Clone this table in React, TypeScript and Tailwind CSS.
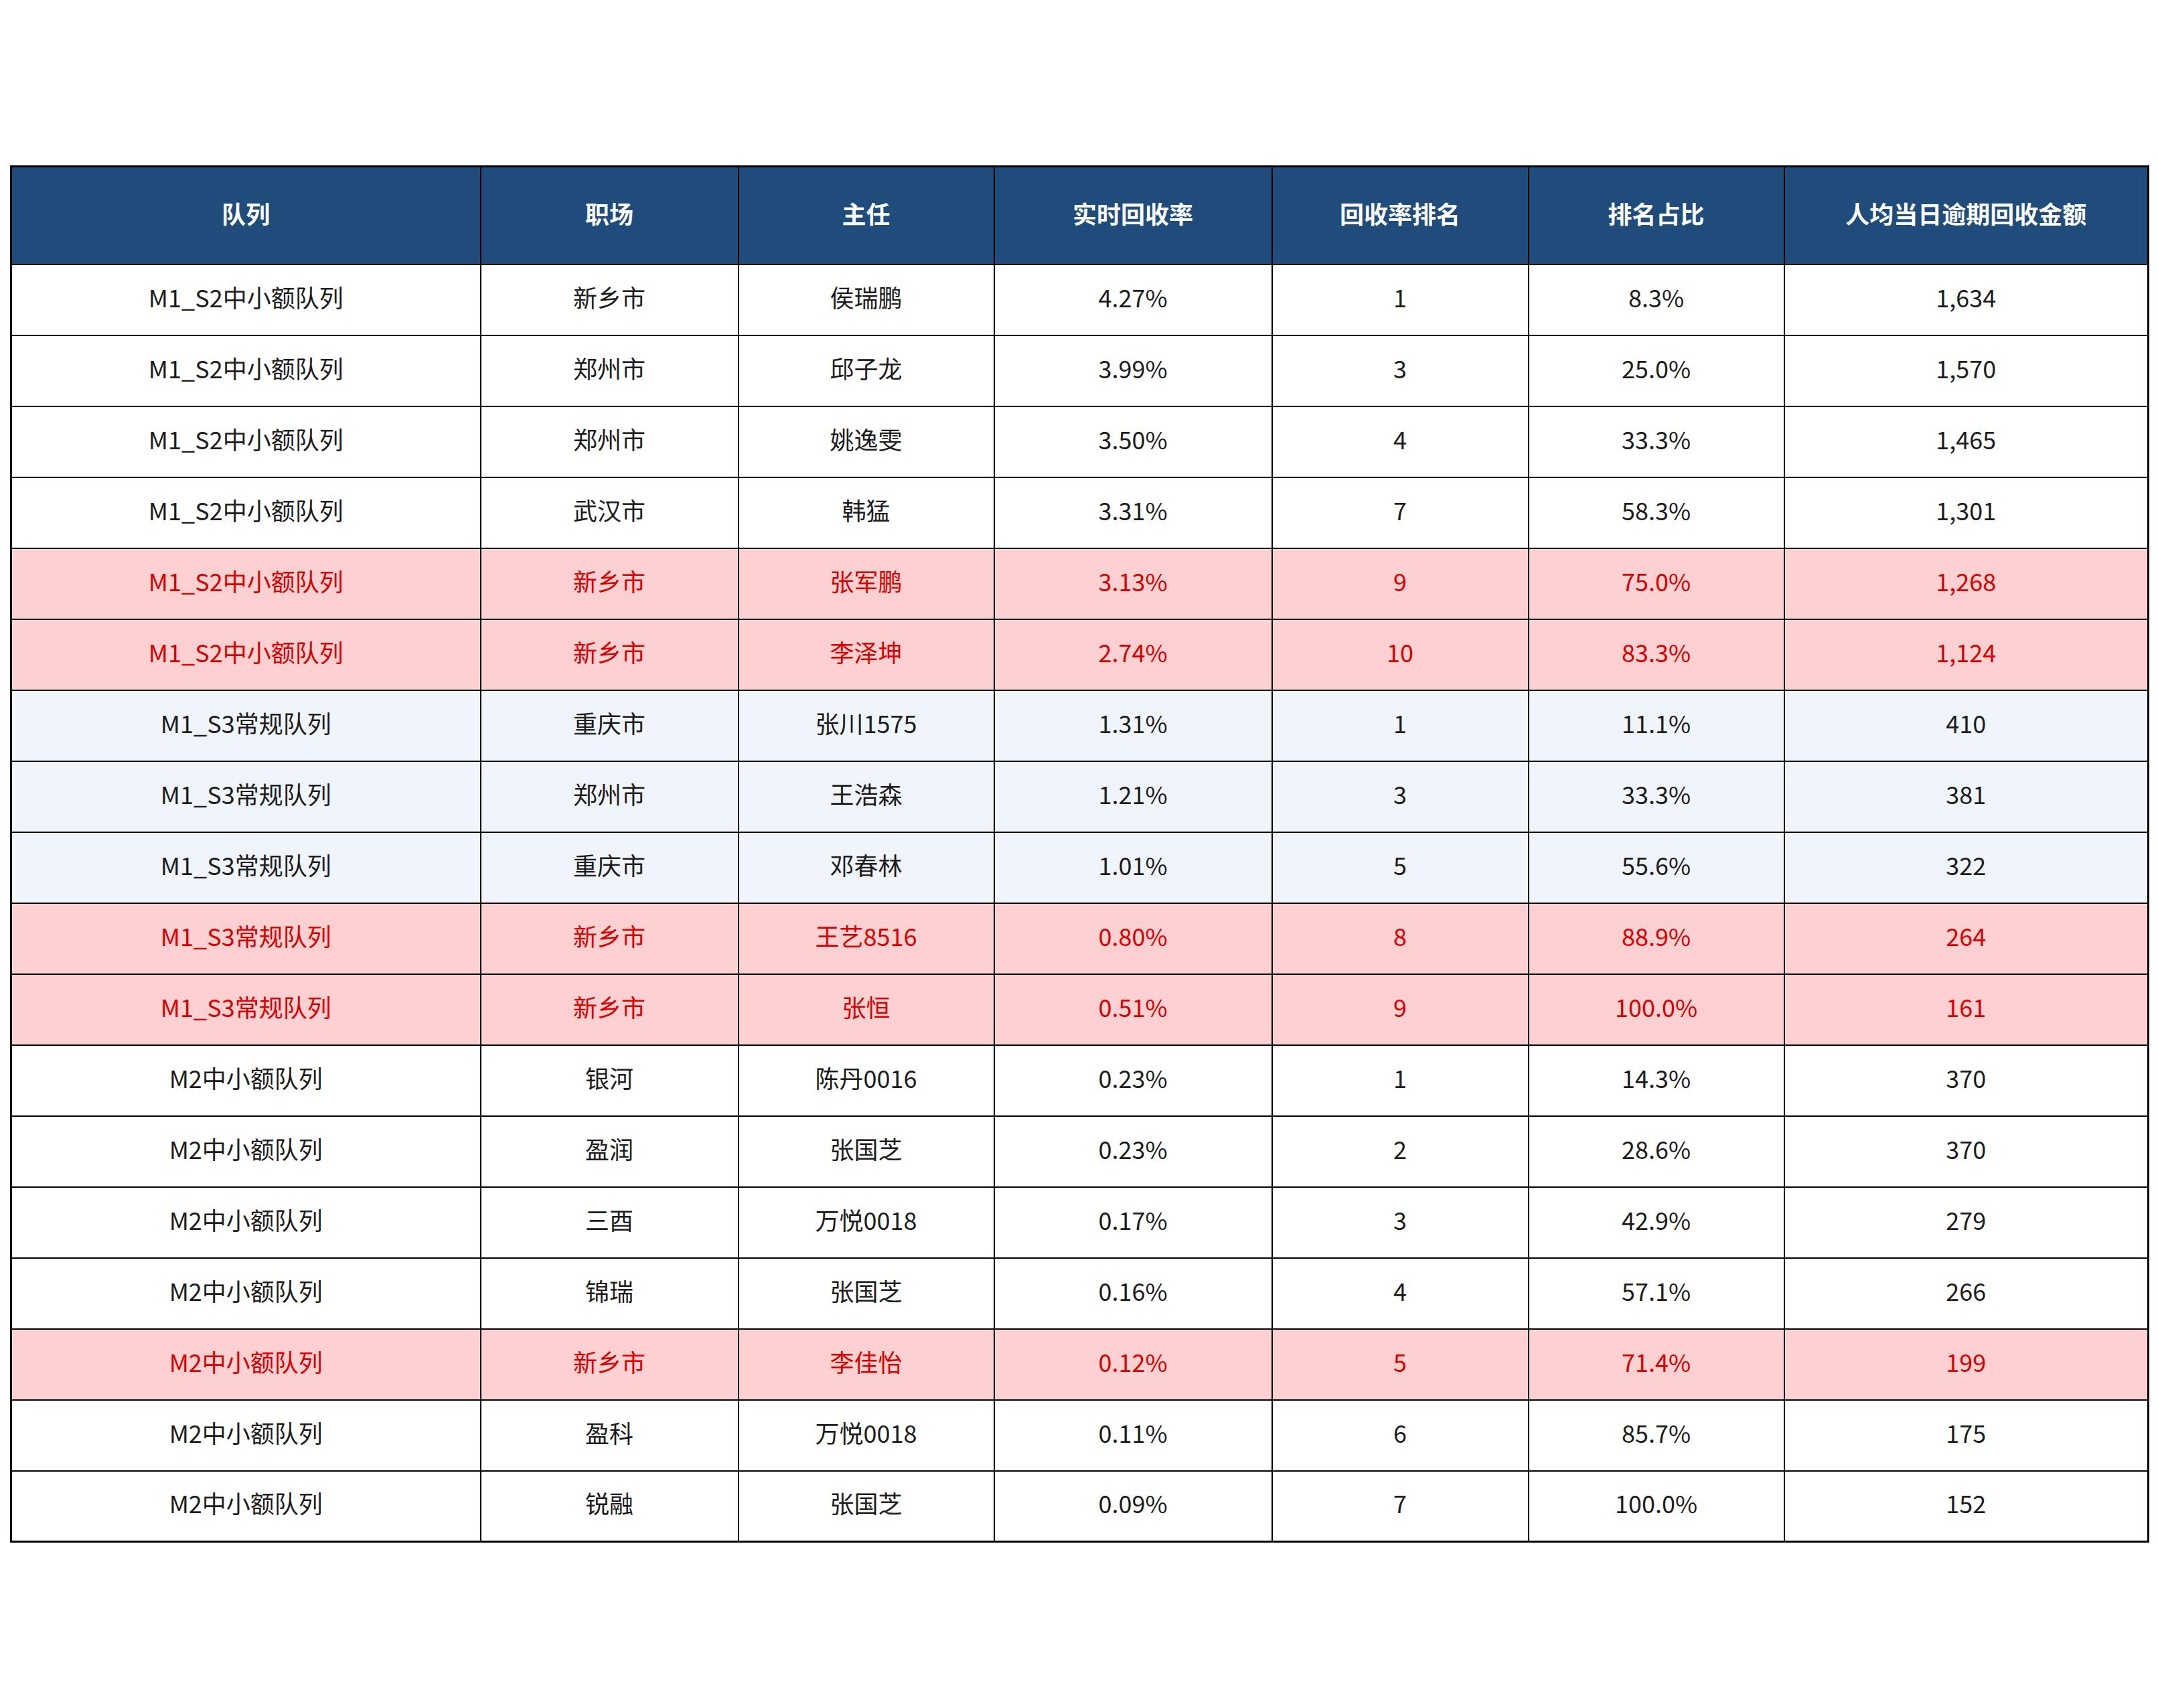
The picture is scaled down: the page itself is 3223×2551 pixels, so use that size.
type Tone = "plain" | "alert" | "soft";

type Row = {
  queue: string;
  site: string;
  lead: string;
  rate: string;
  rank: string;
  share: string;
  amount: string;
  tone: Tone;
};

const headers = ["队列", "职场", "主任", "实时回收率", "回收率排名", "排名占比", "人均当日逾期回收金额"];

const widths = ["w-[701px]", "w-[385px]", "w-[382px]", "w-[415px]", "w-[383px]", "w-[382px]", "w-[544px]"];

const rows: Row[] = [
  { queue: "M1_S2中小额队列", site: "新乡市", lead: "侯瑞鹏", rate: "4.27%", rank: "1", share: "8.3%", amount: "1,634", tone: "plain" },
  { queue: "M1_S2中小额队列", site: "郑州市", lead: "邱子龙", rate: "3.99%", rank: "3", share: "25.0%", amount: "1,570", tone: "plain" },
  { queue: "M1_S2中小额队列", site: "郑州市", lead: "姚逸雯", rate: "3.50%", rank: "4", share: "33.3%", amount: "1,465", tone: "plain" },
  { queue: "M1_S2中小额队列", site: "武汉市", lead: "韩猛", rate: "3.31%", rank: "7", share: "58.3%", amount: "1,301", tone: "plain" },
  { queue: "M1_S2中小额队列", site: "新乡市", lead: "张军鹏", rate: "3.13%", rank: "9", share: "75.0%", amount: "1,268", tone: "alert" },
  { queue: "M1_S2中小额队列", site: "新乡市", lead: "李泽坤", rate: "2.74%", rank: "10", share: "83.3%", amount: "1,124", tone: "alert" },
  { queue: "M1_S3常规队列", site: "重庆市", lead: "张川1575", rate: "1.31%", rank: "1", share: "11.1%", amount: "410", tone: "soft" },
  { queue: "M1_S3常规队列", site: "郑州市", lead: "王浩森", rate: "1.21%", rank: "3", share: "33.3%", amount: "381", tone: "soft" },
  { queue: "M1_S3常规队列", site: "重庆市", lead: "邓春林", rate: "1.01%", rank: "5", share: "55.6%", amount: "322", tone: "soft" },
  { queue: "M1_S3常规队列", site: "新乡市", lead: "王艺8516", rate: "0.80%", rank: "8", share: "88.9%", amount: "264", tone: "alert" },
  { queue: "M1_S3常规队列", site: "新乡市", lead: "张恒", rate: "0.51%", rank: "9", share: "100.0%", amount: "161", tone: "alert" },
  { queue: "M2中小额队列", site: "银河", lead: "陈丹0016", rate: "0.23%", rank: "1", share: "14.3%", amount: "370", tone: "plain" },
  { queue: "M2中小额队列", site: "盈润", lead: "张国芝", rate: "0.23%", rank: "2", share: "28.6%", amount: "370", tone: "plain" },
  { queue: "M2中小额队列", site: "三酉", lead: "万悦0018", rate: "0.17%", rank: "3", share: "42.9%", amount: "279", tone: "plain" },
  { queue: "M2中小额队列", site: "锦瑞", lead: "张国芝", rate: "0.16%", rank: "4", share: "57.1%", amount: "266", tone: "plain" },
  { queue: "M2中小额队列", site: "新乡市", lead: "李佳怡", rate: "0.12%", rank: "5", share: "71.4%", amount: "199", tone: "alert" },
  { queue: "M2中小额队列", site: "盈科", lead: "万悦0018", rate: "0.11%", rank: "6", share: "85.7%", amount: "175", tone: "plain" },
  { queue: "M2中小额队列", site: "锐融", lead: "张国芝", rate: "0.09%", rank: "7", share: "100.0%", amount: "152", tone: "plain" },
];

const toneClass: Record<Tone, string> = {
  plain: "bg-white text-[#1c1c1c]",
  alert: "bg-[#fdd0d1] text-[#d90000]",
  soft: "bg-[#f0f4fb] text-[#1c1c1c]",
};

export default function App() {
  return (
    <div
      className="min-h-screen bg-white pt-[247px] pl-[15px]"
      style={{ fontFamily: '"Noto Sans CJK SC", "Noto Sans", sans-serif' }}
    >
      <table className="table-fixed border-collapse border-[3px] border-black text-[36px] leading-none w-[3192px]">
        <colgroup>
          {widths.map((w, i) => (
            <col key={i} className={w} />
          ))}
        </colgroup>
        <thead>
          <tr className="bg-[#1f4c7a] text-white">
            {headers.map((h) => (
              <th key={h} className="h-[146px] border-2 border-black pb-[8px] text-center align-middle font-bold">
                {h}
              </th>
            ))}
          </tr>
        </thead>
        <tbody>
          {rows.map((r, i) => (
            <tr key={i} className={toneClass[r.tone]}>
              {[r.queue, r.site, r.lead, r.rate, r.rank, r.share, r.amount].map((v, j) => (
                <td key={j} className="h-[106px] border-2 border-black pb-[10px] text-center align-middle font-normal">
                  {v}
                </td>
              ))}
            </tr>
          ))}
        </tbody>
      </table>
    </div>
  );
}
